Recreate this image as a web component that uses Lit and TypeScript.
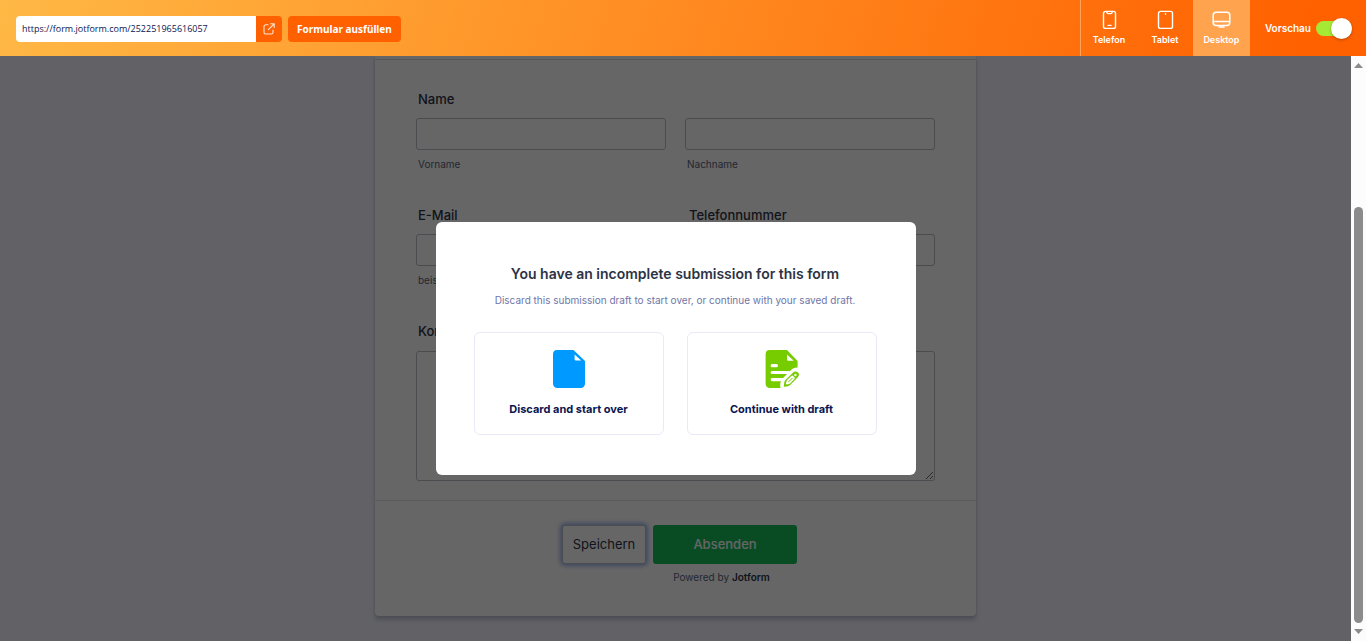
import { LitElement, html, css, svg } from "lit";
import { customElement, state } from "lit/decorators.js";

const phoneIcon = svg`<svg viewBox="0 0 20 20" width="20" height="20" fill="none" stroke="#fff" stroke-width="1.4" stroke-linecap="round" stroke-linejoin="round" aria-hidden="true"><rect x="4.500" y="1.400" width="12" height="17" rx="2"/><path d="M7.800 1.800c0 1.200.6 1.800 1.600 1.800h2.200c1 0 1.600-.6 1.600-1.800M9 15.400h3"/></svg>`;
const tabletIcon = svg`<svg viewBox="0 0 20 20" width="20" height="20" fill="none" stroke="#fff" stroke-width="1.4" stroke-linecap="round" aria-hidden="true"><rect x="3.500" y="1.400" width="14" height="17" rx="2"/><path d="M10.500 3.600v.6"/></svg>`;
const desktopIcon = svg`<svg viewBox="0 0 20 20" width="20" height="20" fill="none" stroke="#fff" stroke-width="1.5" stroke-linecap="round" stroke-linejoin="round" aria-hidden="true"><rect x="2.200" y="2.200" width="16.600" height="13.400" rx="3"/><path d="M2.400 11.600h16.200M8 17h5"/></svg>`;
const openIcon = svg`<svg viewBox="0 0 12 12" width="12" height="12" fill="none" stroke="#ffe6d6" stroke-width="1.1" stroke-linecap="round" stroke-linejoin="round" aria-hidden="true"><path d="M5 1.8H2.6A1.6 1.6 0 0 0 1 3.400V9.400A1.6 1.6 0 0 0 2.600 11H8.400A1.6 1.600 0 0 0 10 9.400V7M7.600.8H11.200V4.400M11 1L5.400 6.600"/></svg>`;
const fileIcon = svg`<svg viewBox="0 0 34 38" width="34" height="38" aria-hidden="true"><path fill="#09f" d="M5 0H21.500L33 11V33.500A4.300 4.300 0 0 1 28.700 38H5.300A4.300 4.300 0 0 1 1 33.500V4.300A4.300 4.300 0 0 1 5 0Z"/><path fill="#fff" d="M22.600 4.600V9.200A1.400 1.400 0 0 0 24 10.600H29.200Z"/></svg>`;
const draftIcon = svg`<svg viewBox="0 0 34 38" width="34" height="38" aria-hidden="true"><path fill="#7c0" d="M4.800 0H22L32.600 11V17.500C29.500 17.400 27.500 18.500 25.500 20.500L19 27C16.500 29.500 15 32 15.200 35.500L15.500 38H4.800A4.300 4.300 0 0 1 .6 33.500V4.300A4.300 4.300 0 0 1 4.800 0Z"/><path fill="#fff" d="M22 4.400V9.400A1.400 1.400 0 0 0 23.400 10.800H28.800Z"/><g stroke="#fff" stroke-width="3.200" stroke-linecap="round"><path d="M7.200 15.700h4.200M7.200 22.500h17M7.200 29.600h11"/></g><path fill="#7c0" stroke="#fff" stroke-width="1.800" d="M17.700 37.800l.7-5.700c.2-1 .6-1.900 1.400-2.700l7.400-7.400c2-1.900 4.800-1.900 6.400-.2s1.500 4.400-.4 6.300l-7.500 7.500c-.8.8-1.700 1.300-2.800 1.500Z"/><path fill="none" stroke="#fff" stroke-width="1.800" stroke-linejoin="round" d="M21.800 33.600l.8-2.600 4.600-4.600 1.800 1.800-4.600 4.600Z"/><circle cx="30.400" cy="25" r="1.200" fill="#fff"/></svg>`;

@customElement("app-root")
export class AppRoot extends LitElement {
  @state() private device = "Desktop";

  static styles = css`
    :host {
      display: flex;
      flex-direction: column;
      height: 100vh;
      font-family: Inter, "Liberation Sans", sans-serif;
      color: #2c3345;
    }
    * { box-sizing: border-box; }
    button, input, textarea { font: inherit; color: inherit; margin: 0; }
    button { cursor: pointer; }

    .topbar {
      flex: none;
      display: flex;
      height: 56px;
      padding-left: 16px;
      align-items: center;
      color: #fff;
      background: linear-gradient(108deg, #ffb845 0%, #ff6100 95%);
    }
    .link-tools { display: flex; padding-top: 2px; }
    .url {
      width: 240px;
      height: 26px;
      padding: 0 6px;
      border: 0;
      border-radius: 4px 0 0 4px;
      background: #fff;
      color: #0a1551;
      font: 9px/26px "Open Sans", "Noto Sans", sans-serif;
    }
    .open {
      display: flex;
      align-items: center;
      justify-content: center;
      width: 26px;
      height: 26px;
      border-radius: 0 4px 4px 0;
      background: #ff6100;
    }
    .fill {
      height: 26px;
      margin-left: 6px;
      padding: 0 9px;
      border: 0;
      border-radius: 4px;
      background: #ff6100;
      color: #fff;
      font: 700 10px/26px "Noto Sans", sans-serif;
    }
    .devices {
      display: flex;
      height: 56px;
      margin-left: auto;
      border-left: 1px solid #ffa35c;
    }
    .device {
      display: flex;
      flex-direction: column;
      align-items: center;
      gap: 4px;
      width: 56px;
      padding: 10px 0 0;
      border: 0;
      background: none;
      color: #fff;
      font-size: 9px;
      font-weight: 600;
      line-height: 12px;
    }
    .device.active { width: 57px; background: #ffa34f; }
    .preview {
      display: flex;
      align-items: center;
      gap: 5px;
      padding: 0 14px 0 15px;
      font-size: 10px;
      font-weight: 600;
    }
    .switch {
      appearance: none;
      display: flex;
      align-items: center;
      justify-content: flex-end;
      width: 36px;
      height: 15px;
      border-radius: 8px;
      background: #a6e935;
    }
    .switch::before {
      content: "";
      flex: none;
      width: 21px;
      height: 21px;
      border-radius: 50%;
      background: #fff;
      box-shadow: 0 1px 3px rgba(0, 0, 0, 0.3);
    }
    .switch:not(:checked) { justify-content: flex-start; background: #c8ceed; }

    .stage { flex: 1; display: flex; min-height: 0; }
    .viewport {
      position: relative;
      flex: 1;
      min-width: 0;
      overflow: hidden;
      background: #f3f3fe;
    }
    .form {
      max-width: 601px;
      margin: 0 auto;
      background: #fff;
      border-radius: 0 0 4px 4px;
      box-shadow: 0 4px 4px rgba(87, 100, 126, 0.3), 0 0 2px rgba(87, 100, 126, 0.2);
      font-size: 13px;
    }
    .form-top { height: 4px; border-bottom: 1px solid #d7d8e1; }
    .fields {
      display: grid;
      grid-template-columns: 1fr 1fr;
      column-gap: 19px;
      row-gap: 36px;
      padding: 31px 41px 19px;
      border-bottom: 1px solid #e3e4ee;
    }
    .field { display: flex; flex-direction: column; }
    .wide { grid-column: 1 / -1; }
    .label { height: 27px; padding-left: 2px; font-weight: 500; line-height: 16px; }
    .wide .label { height: 28px; }
    .indent { padding-left: 4px; }
    .box {
      width: 100%;
      height: 32px;
      border: 1px solid #b8bdc9;
      border-radius: 3px;
      background: #fff;
      padding: 0 8px;
    }
    .area { display: block; height: 130px; resize: vertical; }
    .hint {
      margin-top: 8px;
      padding-left: 2px;
      color: #57647e;
      font-size: 10px;
      line-height: 13px;
    }
    .footer {
      display: flex;
      flex-direction: column;
      align-items: center;
      padding: 24px 0 32px;
    }
    .actions { display: flex; gap: 7px; padding-left: 8px; }
    .save, .submit { height: 39px; padding: 0 0 2px; border-radius: 3px; line-height: 18px; }
    .save {
      width: 84px;
      background: #fff;
      border: 1px solid #b8bdc9;
      box-shadow: 0 0 4px 2px rgba(70, 120, 220, 0.55);
    }
    .submit {
      width: 144px;
      border: 0;
      background: #18bd5b;
      color: #fff;
      font-weight: 500;
    }
    .powered {
      margin: 7px 0 0;
      padding-left: 92px;
      color: #57647e;
      font-size: 10px;
      line-height: 13px;
    }
    .powered a { color: #2c3345; font-weight: 600; text-decoration: none; }

    .backdrop {
      position: absolute;
      inset: 0;
      display: flex;
      align-items: center;
      justify-content: center;
      background: rgba(0, 0, 0, 0.6);
    }
    .dialog {
      width: 480px;
      padding: 42px 39px 40px 38px;
      border-radius: 6px;
      background: #fff;
      text-align: center;
    }
    .title { margin: 0; color: #2c3345; font-size: 14px; font-weight: 600; line-height: 20px; }
    .sub { margin: 7px 0 0; color: #6f76a7; font-size: 10px; line-height: 18px; }
    .choices { display: grid; grid-template-columns: 1fr 1fr; gap: 23px; margin-top: 23px; }
    .choice {
      display: flex;
      flex-direction: column;
      align-items: center;
      gap: 13px;
      height: 103px;
      padding: 17px 0 0;
      border: 1px solid #e9e9f8;
      border-radius: 6px;
      background: #fff;
      color: #0a1551;
      font-size: 11px;
      font-weight: 700;
      line-height: 16px;
    }

    .scroll {
      flex: none;
      display: flex;
      flex-direction: column;
      align-items: center;
      width: 15px;
      padding: 7px 0;
      background: #fcfcfc;
    }
    .arrow { flex: none; fill: #8b8b8b; }
    .track { flex: 1; display: flex; align-items: flex-end; padding-bottom: 6px; }
    .thumb { width: 9px; height: 75%; border-radius: 5px; background: #8b8b8b; }
  `;

  private tab(name: string, icon: unknown) {
    return html`<button
      class="device ${this.device === name ? "active" : ""}"
      @click=${() => (this.device = name)}
    >${icon}<span>${name}</span></button>`;
  }

  render() {
    return html`
      <header class="topbar">
        <div class="link-tools">
          <input class="url" aria-label="URL" readonly .value=${"https://form.jotform.com/252251965616057"} />
          <a class="open" href="#" aria-label="Öffnen">${openIcon}</a>
          <button class="fill">Formular ausfüllen</button>
        </div>
        <nav class="devices">
          ${this.tab("Telefon", phoneIcon)}
          ${this.tab("Tablet", tabletIcon)}
          ${this.tab("Desktop", desktopIcon)}
        </nav>
        <label class="preview">Vorschau<input class="switch" type="checkbox" checked /></label>
      </header>
      <div class="stage">
        <main class="viewport">
          <form class="form" @submit=${(e: Event) => e.preventDefault()}>
            <div class="form-top"></div>
            <div class="fields">
              <div class="field">
                <label class="label" for="first">Name</label>
                <input class="box" id="first" />
                <label class="hint" for="first">Vorname</label>
              </div>
              <div class="field">
                <span class="label"></span>
                <input class="box" id="last" />
                <label class="hint" for="last">Nachname</label>
              </div>
              <div class="field">
                <label class="label" for="mail">E-Mail</label>
                <input class="box" id="mail" type="email" />
                <label class="hint" for="mail">beispiel@beispiel.de</label>
              </div>
              <div class="field">
                <label class="label indent" for="tel">Telefonnummer</label>
                <input class="box" id="tel" type="tel" />
              </div>
              <div class="field wide">
                <label class="label" for="note">Kommentar</label>
                <textarea class="box area" id="note"></textarea>
              </div>
            </div>
            <div class="footer">
              <div class="actions">
                <button class="save" type="button">Speichern</button>
                <button class="submit">Absenden</button>
              </div>
              <p class="powered">Powered by <a href="#">Jotform</a></p>
            </div>
          </form>
          <div class="backdrop">
            <section class="dialog" role="dialog" aria-labelledby="dialog-title">
              <h2 class="title" id="dialog-title">You have an incomplete submission for this form</h2>
              <p class="sub">Discard this submission draft to start over, or continue with your saved draft.</p>
              <div class="choices">
                <button class="choice">${fileIcon}<span>Discard and start over</span></button>
                <button class="choice">${draftIcon}<span>Continue with draft</span></button>
              </div>
            </section>
          </div>
        </main>
        <div class="scroll">
          <svg class="arrow" width="9" height="5" viewBox="0 0 9 5" aria-hidden="true"><path d="M0 5L4.500 0L9 5Z"/></svg>
          <div class="track"><div class="thumb"></div></div>
          <svg class="arrow" width="9" height="5" viewBox="0 0 9 5" aria-hidden="true"><path d="M0 0L4.500 5L9 0Z"/></svg>
        </div>
      </div>
    `;
  }
}
